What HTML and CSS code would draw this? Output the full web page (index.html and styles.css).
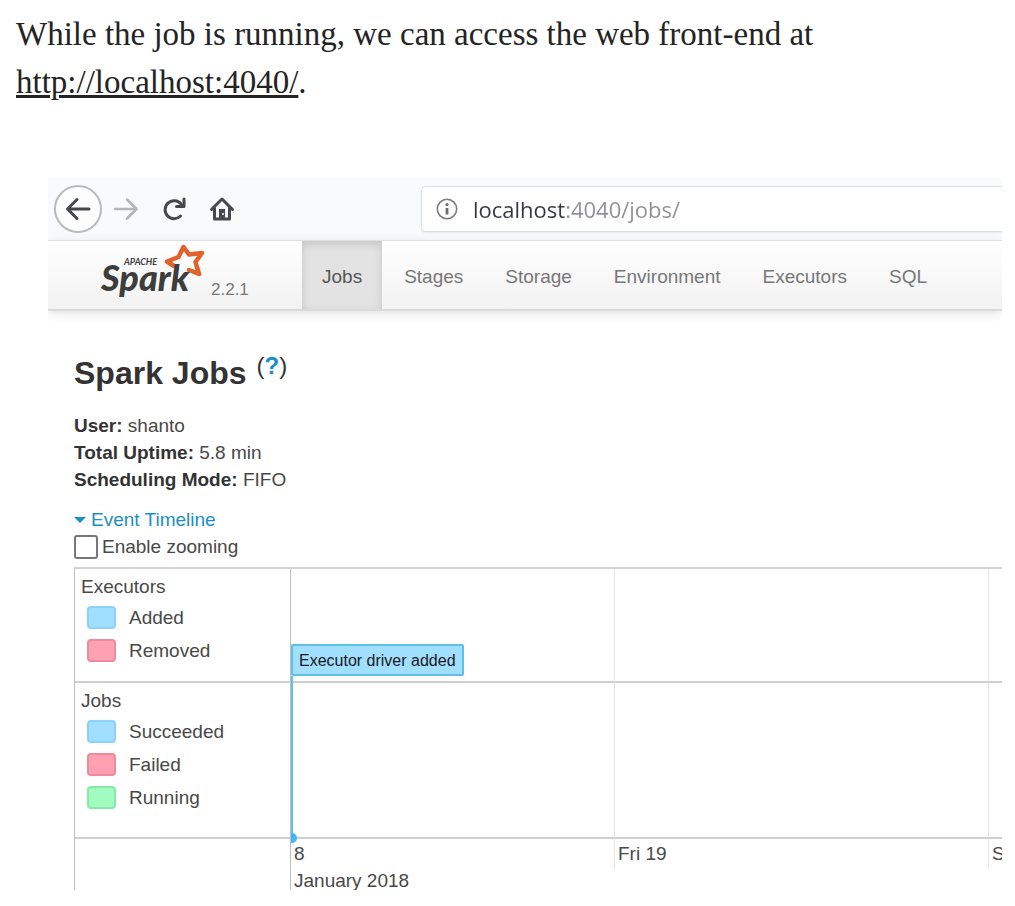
FILE: index.html
```
<!DOCTYPE html>
<html lang="en">
<head>
<meta charset="utf-8">
<title>Spark Jobs</title>
<link rel="stylesheet" href="styles.css">
</head>
<body>
<article class="article">
  <p class="lead">While the job is running, we can access the web front-end at <a class="lead-link" href="http://localhost:4040/">http://localhost:4040/</a>.</p>
  <section class="browser">
    <header class="toolbar">
      <button class="tool tool-back" type="button" aria-label="Back">
        <svg width="26" height="24" viewBox="0 0 26 24"><path d="M24 12H3M12 2.500L2.500 12L12 21.500" fill="none" stroke="#45494d" stroke-width="3" stroke-linecap="round" stroke-linejoin="round"/></svg>
      </button>
      <button class="tool tool-forward" type="button" aria-label="Forward">
        <svg width="26" height="24" viewBox="0 0 26 24"><path d="M2 12H23M14 2.500L23.500 12L14 21.500" fill="none" stroke="#b4b6b8" stroke-width="2.600" stroke-linecap="round" stroke-linejoin="round"/></svg>
      </button>
      <button class="tool tool-reload" type="button" aria-label="Reload">
        <svg width="26" height="26" viewBox="0 0 26 26"><path d="M19.500 20A9 9 0 1 1 20.500 8.500" fill="none" stroke="#45494d" stroke-width="3" stroke-linecap="round"/><path d="M23 3V10.500H15.500" fill="none" stroke="#45494d" stroke-width="3" stroke-linecap="round" stroke-linejoin="round"/></svg>
      </button>
      <button class="tool tool-home" type="button" aria-label="Home">
        <svg width="26" height="26" viewBox="0 0 26 26"><path d="M2.500 13.500L13 3L23.500 13.500M5.500 12V23H20.500V12" fill="none" stroke="#45494d" stroke-width="3" stroke-linecap="round" stroke-linejoin="round"/><path d="M10 22V13H16V22Z" fill="#45494d"/><circle cx="14" cy="18" r="1" fill="#fff"/></svg>
      </button>
      <div class="address">
        <svg width="22" height="22" viewBox="0 0 22 22" aria-hidden="true"><circle cx="11" cy="11" r="9.700" fill="none" stroke="#7b7d7f" stroke-width="1.600"/><circle cx="11" cy="6.500" r="1.600" fill="#6b6d6f"/><path d="M11 10V16.500" stroke="#6b6d6f" stroke-width="2.800"/></svg>
        <input class="address-input" type="text" aria-label="Address" value="localhost:4040/jobs/">
      </div>
    </header>
    <nav class="navbar">
      <a class="brand" href="#">
        <svg class="logo" width="106" height="56" viewBox="0 0 106 56" role="img" aria-label="Apache Spark">
          <path d="M73 23L66 18.500L77.500 14L82.500 4L88 11.500L101 10L94.500 19L98 31L88 27" fill="none" stroke="#e2622b" stroke-width="4.500" stroke-linejoin="round" stroke-linecap="round"/>
          <text class="logo-name" x="0" y="48">Spark</text>
          <text class="logo-apache" x="23" y="22">APACHE</text>
        </svg>
        <span class="version">2.2.1</span>
      </a>
      <a class="tab tab-active" href="#">Jobs</a>
      <a class="tab" href="#">Stages</a>
      <a class="tab" href="#">Storage</a>
      <a class="tab" href="#">Environment</a>
      <a class="tab" href="#">Executors</a>
      <a class="tab" href="#">SQL</a>
    </nav>
    <main class="content">
      <h1 class="title">Spark Jobs <span class="help">(<a href="#">?</a>)</span></h1>
      <ul class="summary">
        <li><strong>User:</strong> shanto</li>
        <li><strong>Total Uptime:</strong> 5.8 min</li>
        <li><strong>Scheduling Mode:</strong> FIFO</li>
      </ul>
      <a class="toggle" href="#"><span class="caret"></span>Event Timeline</a>
      <label class="zooming"><input class="check" type="checkbox">Enable zooming</label>
      <div class="timeline">
        <div class="group">
          <div class="group-name">Executors</div>
          <div class="key"><span class="swatch blue"></span>Added</div>
          <div class="key"><span class="swatch red"></span>Removed</div>
        </div>
        <div class="plot plot-first">
          <div class="event">Executor driver added</div>
        </div>
        <div class="plot"></div>
        <div class="plot"></div>
        <div class="group">
          <div class="group-name">Jobs</div>
          <div class="key"><span class="swatch blue"></span>Succeeded</div>
          <div class="key"><span class="swatch red"></span>Failed</div>
          <div class="key"><span class="swatch green"></span>Running</div>
        </div>
        <div class="plot plot-first"><div class="stem"></div></div>
        <div class="plot"></div>
        <div class="plot"></div>
        <div class="axis-blank"></div>
        <div class="axis axis-first"><div>8</div><div>January 2018</div></div>
        <div class="axis">Fri 19</div>
        <div class="axis">S</div>
      </div>
    </main>
  </section>
</article>
</body>
</html>
```
FILE: styles.css
```
* { box-sizing: border-box; }
body { margin: 0; background: #fff; }
.article { padding: 10px 13px 16px 16px; }
.lead {
  margin: 0 0 72px;
  font: 33px/48px "Liberation Serif", serif;
  color: #242424;
}
.lead-link {
  color: inherit;
  text-decoration-thickness: 3px;
  text-underline-offset: 2px;
}
.browser {
  margin-left: 32px;
  overflow: hidden;
  font: 19px/27px "Liberation Sans", sans-serif;
  color: #484848;
}
.browser a { text-decoration: none; }

.toolbar {
  display: flex;
  align-items: center;
  height: 63px;
  padding-left: 6px;
  background: #f9fafc;
  border-bottom: 1px solid #dedfdf;
}
.tool {
  display: flex;
  align-items: center;
  justify-content: center;
  width: 48px;
  height: 48px;
  padding: 0;
  border: 0;
  background: none;
}
.tool-back {
  border: 2px solid #b9babb;
  border-radius: 50%;
  background: #fdfdfd;
}
.tool-home { margin-right: 175px; }
.address {
  display: flex;
  flex: 1;
  align-items: center;
  gap: 15px;
  min-width: 0;
  height: 46px;
  padding-left: 14px;
  background: #fff;
  border: 1px solid #dddfe0;
  border-right: 0;
  border-radius: 5px 0 0 5px;
  box-shadow: 0 1px 2px #e4e5e6;
}
.address svg { flex: none; }
.address-input {
  flex: 1;
  min-width: 0;
  padding: 0;
  border: 0;
  outline: 0;
  font: 22px/32px "Open Sans", sans-serif;
  color: transparent;
  background: linear-gradient(90deg, #33373f 93px, #8e9095 93px);
  -webkit-background-clip: text;
  background-clip: text;
}

.navbar {
  display: flex;
  gap: 2px;
  height: 70px;
  background: linear-gradient(#fff, #f2f2f2);
  border-bottom: 2px solid #d9d9d9;
  box-shadow: 0 2px 10px #e0e0e0;
}
.brand {
  display: flex;
  align-items: flex-start;
  width: 252px;
  padding: 2px 0 0 53px;
}
.logo { margin-right: 4px; overflow: visible; }
.logo-name {
  font: italic 900 36px Lato, sans-serif;
  fill: #3d3d3d;
}
.logo-apache {
  font: italic 700 9px Lato, sans-serif;
  fill: #3d3d3d;
}
.version {
  padding-top: 33px;
  font-size: 17px;
  color: #777;
}
.tab {
  padding: 0 20px;
  line-height: 72px;
  color: #777;
}
.tab-active {
  color: #555;
  background: #e3e3e3;
  box-shadow: inset 0 3px 8px #c4c4c4;
}

.content { padding: 41px 0 0 26px; }
.title {
  display: flex;
  gap: 10px;
  margin: 0 0 18px;
  font-size: 32px;
  line-height: 42px;
  color: #333;
}
.help {
  font-size: 24px;
  line-height: 28px;
  font-weight: 400;
}
.help a { font-weight: 700; }
.help a, .toggle { color: #1a8fc4; }
.summary {
  margin: 0 0 13px;
  padding: 0;
  list-style: none;
}
.summary strong { color: #333; }
.toggle, .zooming {
  display: flex;
  align-items: center;
}
.caret {
  margin-right: 5px;
  border: 6px solid transparent;
  border-top-color: #1a8fc4;
  border-bottom: 0;
}
.check {
  width: 24px;
  height: 24px;
  margin: 0 4px 0 0;
  appearance: none;
  border: 2px solid #777;
  border-radius: 3px;
  background: #fff;
}

.timeline {
  display: grid;
  grid-template-columns: 215px 324px 374px 1fr;
  grid-template-rows: 114px 156px 51px;
  margin-top: 7px;
  border-top: 2px solid #d3d3d3;
  border-left: 1px solid #bfbfbf;
  overflow: hidden;
}
.group {
  padding: 4px 0 0 6px;
  border-bottom: 2px solid #cfcfcf;
}
.group-name { margin-bottom: 1px; }
.key {
  display: flex;
  align-items: center;
  gap: 13px;
  height: 33px;
  padding-left: 6px;
}
.swatch {
  width: 29px;
  height: 23px;
  border: 2px solid;
  border-radius: 4px;
}
.blue { background: #a0dfff; border-color: #8cd2f8; }
.red { background: #ffa1b0; border-color: #f0899b; }
.green { background: #a2fcc0; border-color: #86eaa8; }
.plot {
  position: relative;
  border-left: 1px solid #e4e4e4;
  border-bottom: 2px solid #cfcfcf;
}
.plot-first, .axis.axis-first { border-left-color: #bfbfbf; }
.event {
  position: absolute;
  left: 0;
  bottom: 5px;
  padding: 2px 6px 0;
  border: 2px solid #5fbfe9;
  border-radius: 2px;
  background: #a0dfff;
  font-size: 16px;
  line-height: 26px;
  color: #1a1a1a;
  white-space: nowrap;
}
.stem {
  position: absolute;
  top: -7px;
  bottom: 0;
  left: 0;
  width: 2px;
  background: #65c0e8;
}
.stem::after {
  content: "";
  position: absolute;
  bottom: -6px;
  left: 0;
  width: 6px;
  height: 10px;
  border-radius: 0 5px 5px 0;
  background: #45b5f0;
}
.axis {
  height: 29px;
  padding: 1px 0 0 3px;
  border-left: 1px solid #e4e4e4;
  white-space: nowrap;
}
.axis-first { height: auto; }
```
